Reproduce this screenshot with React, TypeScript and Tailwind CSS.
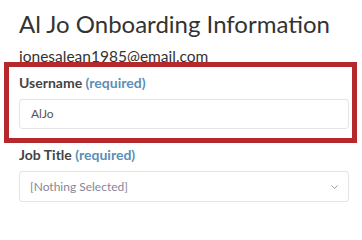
import React from "react";

export default function App() {
  return (
    <div className="w-[362px] h-[212px] overflow-hidden bg-white" style={{ fontFamily: "Lato, 'Open Sans', sans-serif" }}>
      <div className="pl-[19px] pt-[9px]">
        <h1 className="text-[24px] leading-[30px] text-[#333333] font-normal">Al Jo Onboarding Information</h1>
        <div className="mt-[8px] text-[15.5px] leading-[18px] text-[#333333]">jonesalean1985@email.com</div>
      </div>
      <div className="relative ml-[4px] w-[353px] border-[5px] border-[#b5282b] bg-white pl-[10px] pr-[3px] pt-[6px] pb-[9px] -mt-[3px]">
        <div className="text-[14px] leading-[20px] font-bold text-[#444444]">
          Username <span className="text-[#5a8fb8]">(required)</span>
        </div>
        <div className="mt-[6px] h-[30px] border border-[#e4e4e4] rounded-[3px] flex items-center pl-[11px] text-[12px] text-[#555555]">
          AlJo
        </div>
      </div>
      <div className="pl-[19px] pr-[13px]">
        <div className="mt-[2px] text-[14px] leading-[20px] font-bold text-[#444444]">
          Job Title <span className="text-[#5a8fb8]">(required)</span>
        </div>
        <div className="mt-[6px] h-[31px] border border-[#e4e4e4] rounded-[3px] flex items-center justify-between pl-[10px] pr-[10px] text-[12px] text-[#8a8599]">
          <span>[Nothing Selected]</span>
          <svg width="7" height="4" viewBox="0 0 7 4" fill="none">
            <path d="M0.5 0.5l3 3 3-3" stroke="#999999" strokeWidth="1" />
          </svg>
        </div>
      </div>
    </div>
  );
}
